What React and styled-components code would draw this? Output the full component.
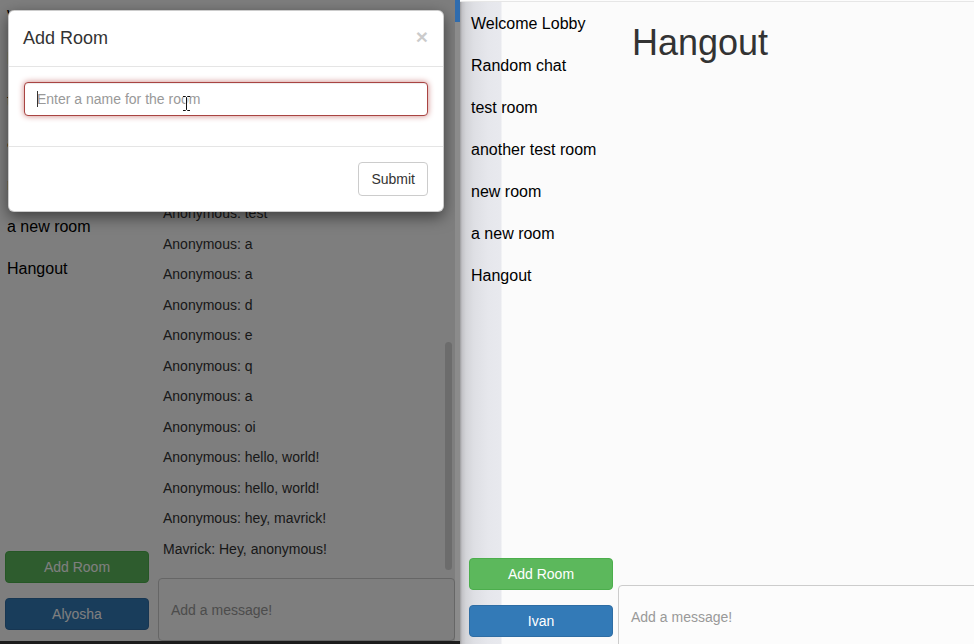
import styled, { createGlobalStyle } from "styled-components";

const GlobalStyle = createGlobalStyle`
  html, body {
    margin: 0;
    padding: 0;
  }
  body {
    font-family: "Liberation Sans", Arial, Helvetica, sans-serif;
    background: #fcfcfc;
    overflow: hidden;
  }
  * {
    box-sizing: border-box;
  }
`;

const Screen = styled.div`
  display: flex;
  width: 974px;
  height: 644px;
  overflow: hidden;
  background: #fcfcfc;
`;

const LeftColumn = styled.div`
  width: 460px;
  flex-shrink: 0;
  display: flex;
  flex-direction: column;
  background: #1c1c1c;
`;

const LeftRow = styled.div`
  display: flex;
  height: 641px;
`;

const Window = styled.div`
  position: relative;
  display: flex;
  flex: 1;
  height: ${({ $height }) => $height}px;
  background: ${({ $bg }) => $bg || "#fcfcfc"};
  overflow: hidden;
`;

const RightWindow = styled(Window)`
  margin-top: 1px;
  border-top: 1px solid #e6e6e6;
  background: linear-gradient(
    to right,
    #9c9c9e 0px,
    #c2c2c6 2px,
    #d3d4d8 6px,
    #dedfe4 14px,
    #e6e7ec 28px,
    #e8e9ee 41px,
    #fbfbfb 42px,
    #fbfbfb 100%
  );
`;

const WindowEdge = styled.div`
  width: 5px;
  flex-shrink: 0;
  display: flex;
  flex-direction: column;
  background: #8b8b8b;
`;

const EdgeTab = styled.div`
  height: 22px;
  background: #2f6cae;
`;

const DesktopStrip = styled.div`
  flex: 1;
  background: #1c1c1c;
`;

const Sidebar = styled.div`
  width: ${({ $width }) => $width}px;
  flex-shrink: 0;
  display: flex;
  flex-direction: column;
  padding: 0 0 11px ${({ $pad }) => $pad}px;
`;

const RoomList = styled.ul`
  list-style: none;
  margin: ${({ $offset }) => $offset}px 0 0;
  padding: 0;
  flex: 1;
`;

const Room = styled.li`
  padding: 12px 2px;
  font-size: 16px;
  line-height: 18px;
  color: #000;
  white-space: nowrap;
`;

const SideButton = styled.button`
  width: 144px;
  height: 32px;
  padding: 0;
  border-radius: 4px;
  border: 1px solid ${({ $variant }) => ($variant === "success" ? "#4cae4c" : "#2e6da4")};
  background: ${({ $variant }) => ($variant === "success" ? "#5cb85c" : "#337ab7")};
  color: #fff;
  font-family: inherit;
  font-size: 14px;
  & + & {
    margin-top: 15px;
  }
`;

const ChatPane = styled.div`
  flex: 1;
  min-width: 0;
  display: flex;
  flex-direction: column;
`;

const Messages = styled.div`
  position: relative;
  flex: 1;
  display: flex;
  flex-direction: column;
  justify-content: flex-end;
  overflow: hidden;
  padding: 0 0 14px 5px;
`;

const Message = styled.div`
  font-size: 14px;
  line-height: 20px;
  padding: 5.25px 0;
  color: #333;
  white-space: nowrap;
`;

const ScrollThumb = styled.div`
  position: absolute;
  right: 3px;
  bottom: 8px;
  width: 7px;
  height: 228px;
  border-radius: 4px;
  background: #d8d8d8;
`;

const Heading = styled.h1`
  margin: 21px 0 0 14px;
  font-size: 36px;
  font-weight: 500;
  line-height: 1.1;
  color: #333;
`;

const Spacer = styled.div`
  flex: 1;
`;

const MessageInput = styled.textarea`
  display: block;
  width: ${({ $wide }) => ($wide ? "calc(100% + 20px)" : "100%")};
  height: 63px;
  padding: 21px 12px;
  border: 1px solid #ccc;
  border-radius: 4px;
  background: #fcfcfc;
  font-family: inherit;
  font-size: 14px;
  line-height: 20px;
  color: #555;
  resize: none;
  overflow: hidden;
  &::placeholder {
    color: #999;
  }
`;

const Backdrop = styled.div`
  position: absolute;
  inset: 0;
  background: rgba(0, 0, 0, 0.5);
`;

const Modal = styled.div`
  position: absolute;
  left: 8px;
  top: 10px;
  width: 436px;
  background: #fff;
  border: 1px solid rgba(0, 0, 0, 0.2);
  border-radius: 6px;
  box-shadow: 0 5px 15px rgba(0, 0, 0, 0.5);
`;

const ModalHeader = styled.div`
  display: flex;
  align-items: center;
  justify-content: space-between;
  padding: 15px 15px 14px 14px;
  border-bottom: 1px solid #e5e5e5;
`;

const ModalTitle = styled.h4`
  margin: 0;
  font-size: 18px;
  font-weight: 500;
  line-height: 1.42857;
  color: #333;
`;

const CloseButton = styled.span`
  font-size: 21px;
  font-weight: 700;
  line-height: 1;
  color: #000;
  opacity: 0.2;
  margin-top: -4px;
`;

const ModalBody = styled.div`
  padding: 15px 15px 0;
`;

const FormGroup = styled.div`
  position: relative;
  margin-bottom: 30px;
`;

const RoomInput = styled.input`
  display: block;
  width: 100%;
  height: 34px;
  padding: 6px 12px;
  border: 1px solid #a94442;
  border-radius: 4px;
  box-shadow: inset 0 1px 1px rgba(0, 0, 0, 0.075), 0 0 6px #ce8483;
  font-family: inherit;
  font-size: 14px;
  color: #555;
  outline: none;
  &::placeholder {
    color: #999;
  }
`;

const Caret = styled.span`
  position: absolute;
  left: 13px;
  top: 9px;
  width: 1px;
  height: 16px;
  background: #333;
`;

const IBeam = styled.svg`
  position: absolute;
  left: 158px;
  top: 13px;
`;

const ModalFooter = styled.div`
  display: flex;
  justify-content: flex-end;
  padding: 15px;
  border-top: 1px solid #e5e5e5;
`;

const SubmitButton = styled.button`
  height: 34px;
  padding: 6px 12px;
  border: 1px solid #ccc;
  border-radius: 4px;
  background: #fff;
  font-family: inherit;
  font-size: 14px;
  color: #333;
`;

const rooms = [
  "Welcome Lobby",
  "Random chat",
  "test room",
  "another test room",
  "new room",
  "a new room",
  "Hangout",
];

const messages = [
  "Anonymous: test",
  "Anonymous: a",
  "Anonymous: a",
  "Anonymous: d",
  "Anonymous: e",
  "Anonymous: q",
  "Anonymous: a",
  "Anonymous: oi",
  "Anonymous: hello, world!",
  "Anonymous: hello, world!",
  "Anonymous: hey, mavrick!",
  "Mavrick: Hey, anonymous!",
];

const RoomSidebar = ({ width, pad, offset, user }) => (
  <Sidebar $width={width} $pad={pad}>
    <RoomList $offset={offset}>
      {rooms.map((r, i) => (
        <Room key={i}>{r}</Room>
      ))}
    </RoomList>
    <SideButton $variant="success">Add Room</SideButton>
    <SideButton $variant="primary">{user}</SideButton>
  </Sidebar>
);

export default function App() {
  return (
    <>
      <GlobalStyle />
      <Screen>
        <LeftColumn>
          <LeftRow>
            <Window $height={641} $bg="#fcfcfc">
              <RoomSidebar width={158} pad={5} offset={-4.5} user="Alyosha" />
              <ChatPane>
                <Messages>
                  {messages.map((m, i) => (
                    <Message key={i}>{m}</Message>
                  ))}
                  <ScrollThumb />
                </Messages>
                <MessageInput placeholder="Add a message!" />
              </ChatPane>
              <Backdrop />
              <Modal>
                <ModalHeader>
                  <ModalTitle>Add Room</ModalTitle>
                  <CloseButton>×</CloseButton>
                </ModalHeader>
                <ModalBody>
                  <FormGroup>
                    <RoomInput placeholder="Enter a name for the room" />
                    <Caret />
                    <IBeam width="9" height="17" viewBox="0 0 9 17">
                      <path
                        d="M1 1.5h2.5l1 1 1-1H8M4.5 2.5v12M1 15.5h2.5l1-1 1 1H8"
                        fill="none"
                        stroke="#fff"
                        strokeWidth="2.2"
                      />
                      <path
                        d="M1 1.5h2.5l1 1 1-1H8M4.5 2.5v12M1 15.5h2.5l1-1 1 1H8"
                        fill="none"
                        stroke="#111"
                        strokeWidth="1"
                      />
                    </IBeam>
                  </FormGroup>
                </ModalBody>
                <ModalFooter>
                  <SubmitButton>Submit</SubmitButton>
                </ModalFooter>
              </Modal>
            </Window>
            <WindowEdge>
              <EdgeTab />
            </WindowEdge>
          </LeftRow>
          <DesktopStrip />
        </LeftColumn>
        <RightWindow $height={647}>
          <RoomSidebar width={158} pad={9} offset={0.5} user="Ivan" />
          <ChatPane>
            <Heading>Hangout</Heading>
            <Spacer />
            <MessageInput $wide placeholder="Add a message!" />
          </ChatPane>
        </RightWindow>
      </Screen>
    </>
  );
}
